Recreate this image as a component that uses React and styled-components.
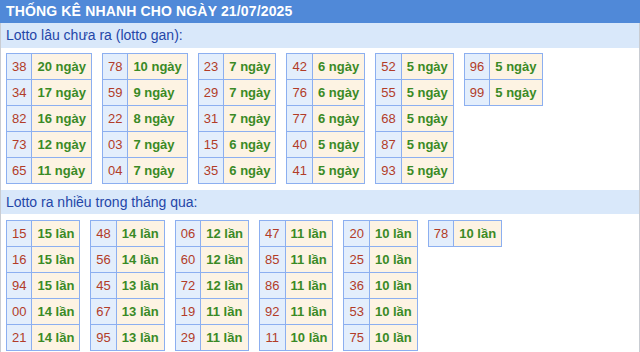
import React from "react";
import styled, { createGlobalStyle } from "styled-components";

const Global = createGlobalStyle`
  html, body { margin: 0; padding: 0; background: #fff; }
  body { font-family: "Liberation Sans", Arial, sans-serif; }
`;

const Page = styled.div`
  width: 640px;
  height: 352px;
  overflow: hidden;
  display: flex;
  flex-direction: column;
`;

const Header = styled.div`
  height: 23px;
  line-height: 23px;
  background: #5089d8;
  color: #fff;
  font-size: 14px;
  letter-spacing: 0.15px;
  font-weight: bold;
  padding-left: 6px;
  white-space: nowrap;
`;

const Body = styled.div`
  flex: 1;
  border-left: 1px solid #c9ccd2;
  border-right: 1px solid #c9ccd2;
  display: flex;
  flex-direction: column;
`;

const SectionTitle = styled.div`
  height: ${(p) => p.$h}px;
  line-height: ${(p) => p.$h}px;
  margin-top: ${(p) => p.$mt}px;
  background: #d9e8fa;
  color: #2446a8;
  font-size: 14px;
  padding-left: 5px;
  white-space: nowrap;
`;

const Tables = styled.div`
  display: flex;
  flex-wrap: wrap;
  align-items: flex-start;
  gap: 10px;
  padding-left: 5px;
  margin-top: ${(p) => p.$mt}px;
`;

const Table = styled.table`
  border-collapse: collapse;
  font-size: 13px;
`;

const NumCell = styled.td`
  border: 1px solid #8caff0;
  background: #e3eefc;
  color: #b23c28;
  padding: 0 5px;
  line-height: 25px;
  text-align: center;
  white-space: nowrap;
`;

const ValCell = styled.td`
  border: 1px solid #8caff0;
  background: #fdf3e3;
  color: #3a8a26;
  font-weight: bold;
  padding: 0 5px;
  line-height: 25px;
  white-space: nowrap;
`;

const gan = [
  [["38", 20], ["34", 17], ["82", 16], ["73", 12], ["65", 11]],
  [["78", 10], ["59", 9], ["22", 8], ["03", 7], ["04", 7]],
  [["23", 7], ["29", 7], ["31", 7], ["15", 6], ["35", 6]],
  [["42", 6], ["76", 6], ["77", 6], ["40", 5], ["41", 5]],
  [["52", 5], ["55", 5], ["68", 5], ["87", 5], ["93", 5]],
  [["96", 5], ["99", 5]],
];

const nhieu = [
  [["15", 15], ["16", 15], ["94", 15], ["00", 14], ["21", 14]],
  [["48", 14], ["56", 14], ["45", 13], ["67", 13], ["95", 13]],
  [["06", 12], ["60", 12], ["72", 12], ["19", 11], ["29", 11]],
  [["47", 11], ["85", 11], ["86", 11], ["92", 11], ["11", 10]],
  [["20", 10], ["25", 10], ["36", 10], ["53", 10], ["75", 10]],
  [["78", 10]],
];

function StatTable({ rows, unit }) {
  return (
    <Table>
      <tbody>
        {rows.map(([n, v]) => (
          <tr key={n}>
            <NumCell>{n}</NumCell>
            <ValCell>
              {v} {unit}
            </ValCell>
          </tr>
        ))}
      </tbody>
    </Table>
  );
}

export default function App() {
  return (
    <>
      <Global />
      <Page>
        <Header>THỐNG KÊ NHANH CHO NGÀY 21/07/2025</Header>
        <Body>
          <SectionTitle $h={25} $mt={0}>Lotto lâu chưa ra (lotto gan):</SectionTitle>
          <Tables $mt={5}>
            {gan.map((rows, i) => (
              <StatTable key={i} rows={rows} unit="ngày" />
            ))}
          </Tables>
          <SectionTitle $h={24} $mt={6}>Lotto ra nhiều trong tháng qua:</SectionTitle>
          <Tables $mt={6}>
            {nhieu.map((rows, i) => (
              <StatTable key={i} rows={rows} unit="lần" />
            ))}
          </Tables>
        </Body>
      </Page>
    </>
  );
}
